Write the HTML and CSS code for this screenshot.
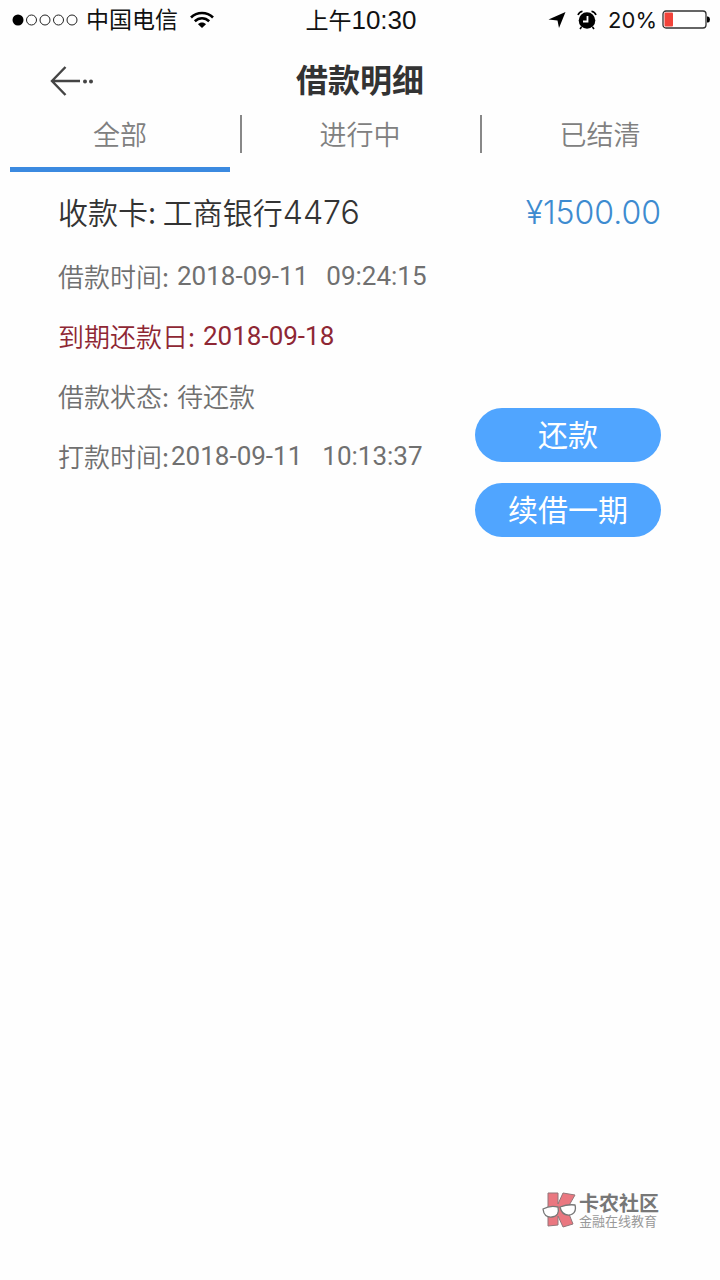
FILE: index.html
```html
<!DOCTYPE html>
<html lang="zh-CN">
<head>
<meta charset="utf-8">
<meta name="viewport" content="width=device-width, initial-scale=1">
<title>借款明细</title>
<link rel="stylesheet" href="styles.css">
</head>
<body>
<div class="status">
  <div class="status-left">
    <svg width="66" height="14" viewBox="0 0 66 14" fill="none" stroke="#222"><circle cx="6" cy="7" r="5.500" fill="#000" stroke="none"/><circle cx="19.500" cy="7" r="5"/><circle cx="33" cy="7" r="5"/><circle cx="46.500" cy="7" r="5"/><circle cx="60" cy="7" r="5"/></svg>
    <span>中国电信</span>
    <svg class="wifi" width="24" height="18" viewBox="0 0 24 18" fill="none" stroke="#000" stroke-width="2.600"><path d="M1 6.500C7 .5 17 .5 23 6.500M4.800 10.300C9 6.300 15 6.300 19.200 10.300"/><path d="M8 13.200C10 11 14 11 16 13.200L12 17Z" fill="#000" stroke="none"/></svg>
  </div>
  <div class="status-time">上午<span class="clock-digits">10:30</span></div>
  <div class="status-right">
    <svg width="18" height="18" viewBox="0 0 18 18"><path d="M17.500 1L11 17L9.500 9.500L.5 8.500Z"/></svg>
    <svg width="20" height="20" viewBox="0 0 20 20"><circle cx="10" cy="10.500" r="8.300"/><path d="M1 5Q2 2 5.500 1.200M19 5Q18 2 14.500 1.200M4.500 17L3 19M15.500 17L17 19" fill="none" stroke="#000" stroke-width="1.600"/><path d="M10.500 6V11.500H6" fill="none" stroke="#fff" stroke-width="1.800"/></svg>
    <span class="percent">20%</span>
    <svg class="battery" width="48" height="20" viewBox="0 0 48 20"><rect x="1" y="1" width="43" height="17" rx="3" fill="#fff" stroke="#333" stroke-width="1.300"/><rect x="2.500" y="2.500" width="8.500" height="14" rx="1" fill="#f2433a"/><path d="M45 6.500H46Q48 7 48 9.500T46 12.500H45Z"/></svg>
  </div>
</div>
<header class="header">
  <button class="back" type="button" aria-label="返回"><svg width="44" height="30" viewBox="0 0 44 30" fill="none" stroke="#444" stroke-width="2.400"><path d="M15.500 1L2 15L15.500 29M2 15H30"/><g fill="#444" stroke="none"><circle cx="35" cy="15.500" r="2"/><circle cx="41" cy="15.500" r="2"/></g></svg></button>
  <h1 class="title">借款明细</h1>
</header>
<nav class="tabs">
  <button class="tab tab-active" type="button">全部</button>
  <button class="tab" type="button">进行中</button>
  <button class="tab" type="button">已结清</button>
</nav>
<main class="loan">
  <div class="summary">
    <span>收款卡: 工商银行<span class="num">4476</span></span>
    <span class="amount">¥1500.00</span>
  </div>
  <div class="details">
    <div class="rows">
      <div class="row"><span>借款时间:</span><time class="date">2018-09-11</time><time class="date clock">09:24:15</time></div>
      <div class="row due"><span>到期还款日:</span><time class="date">2018-09-18</time></div>
      <div class="row"><span>借款状态:</span><span>待还款</span></div>
      <div class="row tight"><span>打款时间:</span><time class="date">2018-09-11</time><time class="date clock">10:13:37</time></div>
    </div>
    <div class="actions">
      <button class="action" type="button">还款</button>
      <button class="action" type="button">续借一期</button>
    </div>
  </div>
</main>
<footer class="brand">
  <svg width="35" height="36" viewBox="0 0 35 36"><path d="M6 1H16V12L21 1L33 3L25 17L31 32L21 35L16 24V33L6 34Z" fill="#ea7780" stroke="#92777a"/><g fill="#fff" stroke="#777" stroke-width="1.300"><path d="M1 17Q8 13 16 15Q18 24 10 25Q2 26 1 17Z"/><path d="M18 15Q26 12 33 13Q35 21 28 23Q20 24 18 15Z"/></g></svg>
  <div class="brand-text"><div class="brand-name">卡农社区</div><div class="brand-sub">金融在线教育</div></div>
</footer>
</body>
</html>
```
FILE: styles.css
```css
* { box-sizing: border-box; }
body {
  margin: 0;
  min-height: 100vh;
  display: flex;
  flex-direction: column;
  background: #fefefe;
  color: #333;
  font-family: "Noto Sans CJK SC", sans-serif;
}
svg { display: block; flex: none; }
button {
  border: 0;
  padding: 0;
  background: none;
  font-family: inherit;
}
.status {
  display: grid;
  grid-template-columns: 1fr auto 1fr;
  align-items: center;
  height: 40px;
  padding: 0 10px 0 12px;
  color: #111;
  font-family: Inter, "Noto Sans CJK SC", sans-serif;
  font-size: 23px;
  line-height: 38px;
}
.status-left, .status-right { display: flex; align-items: center; }
.status-left { gap: 8px; }
.wifi { margin-left: 4px; }
.clock-digits {
  font-family: "Liberation Sans", sans-serif;
  font-size: 26px;
}
.status-right { justify-content: flex-end; gap: 11px; }
.percent { font-size: 22px; }
.battery { margin-left: -6px; }
.header {
  display: grid;
  grid-template-columns: 1fr auto 1fr;
  align-items: center;
  height: 75px;
  padding: 7px 50px 0;
}
.back { justify-self: start; }
.title {
  margin: 0;
  padding-bottom: 6px;
  font-size: 32px;
  font-weight: 700;
  line-height: 48px;
}
.tabs {
  display: grid;
  grid-template-columns: repeat(3, 1fr);
  height: 57px;
}
.tab {
  position: relative;
  padding-bottom: 20px;
  color: #808080;
  font-size: 27px;
  font-weight: 350;
  line-height: 36px;
}
.tab + .tab::before {
  content: "";
  position: absolute;
  top: 0;
  left: 0;
  width: 2px;
  height: 38px;
  background: #888;
}
.tab-active::after {
  content: "";
  position: absolute;
  right: 10px;
  bottom: 0;
  left: 10px;
  height: 5px;
  background: #3b8ae0;
}
.loan { padding: 14px 59px 0 58px; }
.summary {
  display: flex;
  justify-content: space-between;
  font-size: 30px;
  font-weight: 350;
  line-height: 50px;
}
.num, .amount {
  font-family: Inter, sans-serif;
  font-size: 32px;
  font-weight: 300;
}
.amount {
  padding-top: 3px;
  color: #3d8bd0;
  line-height: 48px;
}
.details {
  display: flex;
  justify-content: space-between;
  margin-top: 8px;
}
.row {
  display: flex;
  gap: 8px;
  color: #707070;
  font-size: 26px;
  font-weight: 350;
  line-height: 60px;
  white-space: nowrap;
}
.tight { gap: 2px; }
.due { color: #8e2734; }
.date {
  font-family: Roboto, sans-serif;
  font-weight: 400;
}
.clock { margin-left: 10px; }
.tight .clock { margin-left: 18px; }
.actions {
  display: flex;
  flex-direction: column;
  gap: 21px;
  width: 186px;
  margin-top: 162px;
}
.action {
  height: 54px;
  padding-bottom: 4px;
  border-radius: 27px;
  background: #50a5ff;
  color: #fff;
  font-size: 30px;
  font-weight: 400;
  line-height: 50px;
}
.brand {
  display: flex;
  align-items: center;
  justify-content: flex-end;
  gap: 2px;
  margin-top: auto;
  padding: 0 61px 51px 0;
}
.brand-text { padding-top: 2px; }
.brand-name {
  color: #777;
  font-size: 20px;
  font-weight: 700;
  line-height: 20px;
}
.brand-sub {
  color: #999;
  font-size: 13px;
  line-height: 16px;
}
```
